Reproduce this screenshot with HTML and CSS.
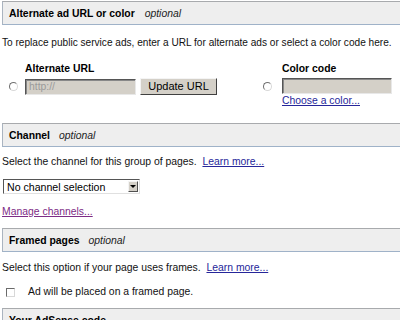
FILE: index.html
```html
<!DOCTYPE html>
<html>
<head>
<meta charset="utf-8">
<link rel="stylesheet" href="styles.css">
</head>
<body>
<div class="page">
  <div class="hdr hdr-first"><b>Alternate ad URL or color</b><i>optional</i></div>
  <p class="line l1">To replace public service ads, enter a URL for alternate ads or select a color code here.</p>
  <div class="alt-row">
    <div class="opt opt-url">
      <span></span><span class="lbl">Alternate URL</span>
      <span class="radio"></span>
      <div class="ctrls"><span class="field url">http://</span><span class="btn">Update URL</span></div>
    </div>
    <div class="opt opt-color">
      <span></span><span class="lbl">Color code</span>
      <span class="radio"></span>
      <span class="field color"></span>
      <span></span><a class="link" href="#">Choose a color...</a>
    </div>
  </div>
  <div class="hdr hdr-chan"><b>Channel</b><i>optional</i></div>
  <p class="line l2">Select the channel for this group of pages.&nbsp; <a class="link" href="#">Learn more...</a></p>
  <div class="select"><span class="sel-text">No channel selection</span><span class="sel-btn"><span class="arrow"></span></span></div>
  <p class="line l3"><a class="link visited" href="#">Manage channels...</a></p>
  <div class="hdr hdr-frame"><b>Framed pages</b><i>optional</i></div>
  <p class="line l4">Select this option if your page uses frames.&nbsp; <a class="link" href="#">Learn more...</a></p>
  <div class="check-row"><span class="checkbox"></span><span>Ad will be placed on a framed page.</span></div>
  <div class="hdr hdr-code"><b>Your AdSense code</b></div>
</div>
</body>
</html>
```

FILE: styles.css
```css
html, body {
  margin: 0;
  padding: 0;
  background: #ffffff;
  overflow: hidden;
}
body {
  font-family: "Liberation Sans", Arial, sans-serif;
  font-size: 10.4px;
  color: #111111;
}
.page {
  padding-left: 2px;
}
.hdr {
  display: flex;
  align-items: center;
  gap: 9px;
  height: 22px;
  margin-right: -6px;
  padding-left: 6px;
  background: #eeeeee;
  border: 1px solid #aab4c0;
  border-top-color: #a8aaad;
  border-bottom-color: #9fb2c8;
}
.hdr b {
  font-weight: bold;
  color: #000;
}
.hdr i {
  font-style: italic;
  color: #222;
}
.hdr-first {
  margin-top: 1px;
}
.hdr-first i {
  margin-left: 1px;
}
.line {
  margin: 0;
  line-height: 14px;
  white-space: nowrap;
}
.l1 {
  margin-top: 11px;
  font-size: 10.1px;
}
.alt-row {
  display: flex;
  margin-top: 12px;
}
.opt {
  display: grid;
  align-items: center;
}
.opt-url {
  grid-template-columns: 9px auto;
  column-gap: 7px;
  margin-left: 7px;
  width: 254px;
  align-content: start;
}
.opt-color {
  grid-template-columns: 9px auto;
  column-gap: 10px;
}
.lbl {
  font-weight: bold;
  color: #000;
  line-height: 14px;
  margin-bottom: 2px;
}
.radio {
  width: 7px;
  height: 7px;
  border-radius: 50%;
  border: 1px solid;
  border-color: #707070 #d8d8d8 #d8d8d8 #707070;
  background: #ffffff;
}
.ctrls {
  display: flex;
  align-items: center;
  gap: 4px;
}
.field {
  box-sizing: border-box;
  height: 16px;
  background: #d4d0c8;
  border: 1px solid;
  border-color: #555555 #e8e8e8 #e8e8e8 #555555;
  box-shadow: inset 1px 1px 0 #888;
  color: #9a9a9a;
  line-height: 13px;
  padding-left: 3px;
}
.field.url {
  width: 111px;
}
.field.color {
  width: 110px;
}
.btn {
  box-sizing: border-box;
  width: 77px;
  height: 17px;
  background: #d4d0c8;
  border: 1px solid;
  border-color: #f4f4f4 #404040 #404040 #f4f4f4;
  font-size: 11px;
  line-height: 15px;
  text-align: center;
  color: #000;
}
.link {
  color: #26269a;
  text-decoration: underline;
  line-height: 14px;
}
.link.visited {
  color: #7d2c86;
}
.hdr-chan {
  margin-top: 15px;
}
.l2 {
  margin-top: 8px;
}
.select {
  box-sizing: border-box;
  display: flex;
  align-items: center;
  width: 137px;
  height: 15px;
  margin-top: 10px;
  margin-left: 1px;
  border: 1px solid;
  border-color: #555 #e0e0e0 #e0e0e0 #555;
  background: #fff;
}
.sel-text {
  flex: 1;
  padding-left: 3px;
  font-size: 10.6px;
  color: #000;
}
.sel-btn {
  box-sizing: border-box;
  width: 10px;
  height: 11px;
  margin-right: 1px;
  background: #d4d0c8;
  border: 1px solid;
  border-color: #f4f4f4 #505050 #505050 #f4f4f4;
  display: flex;
  align-items: center;
  justify-content: center;
}
.arrow {
  width: 0;
  height: 0;
  border-left: 3px solid transparent;
  border-right: 3px solid transparent;
  border-top: 3px solid #000;
}
.l3 {
  margin-top: 11px;
}
.hdr-frame {
  margin-top: 9px;
}
.l4 {
  margin-top: 9px;
}
.check-row {
  display: flex;
  align-items: center;
  gap: 13px;
  margin-top: 10px;
  margin-left: 4px;
  line-height: 14px;
}
.checkbox {
  box-sizing: border-box;
  width: 9px;
  height: 9px;
  border: 1px solid;
  border-color: #6a6a6a #d8d8d8 #d8d8d8 #6a6a6a;
  background: #fff;
}
.hdr-code {
  margin-top: 9px;
}
```
